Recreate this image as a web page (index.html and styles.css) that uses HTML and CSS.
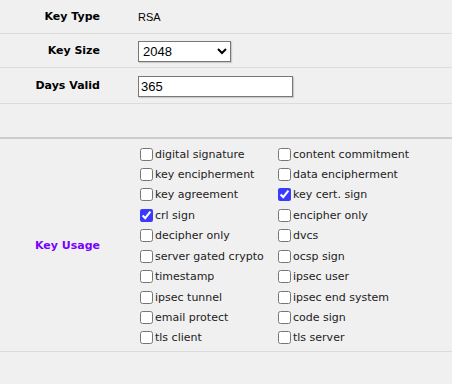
FILE: index.html
```html
<!DOCTYPE html>
<html lang="en">
<head>
    <meta charset="UTF-8">
    <title>Key settings</title>
    <link rel="stylesheet" href="styles.css">
</head>
<body>
    <div class="form">
        <div class="row row-type">
            <div class="label">Key Type</div>
            <div class="value plain">RSA</div>
        </div>
        <div class="row row-size">
            <div class="label">Key Size</div>
            <div class="value">
                <select class="size">
                    <option>1024</option>
                    <option selected>2048</option>
                    <option>4096</option>
                </select>
            </div>
        </div>
        <div class="row row-days">
            <div class="label">Days Valid</div>
            <div class="value"><input class="days" type="text" value="365"></div>
        </div>
        <div class="row row-empty"></div>
        <div class="row row-usage">
            <div class="label usage-label">Key Usage</div>
            <div class="value usage">
                <label><input type="checkbox">digital signature</label>
                <label><input type="checkbox">content commitment</label>
                <label><input type="checkbox">key encipherment</label>
                <label><input type="checkbox">data encipherment</label>
                <label><input type="checkbox">key agreement</label>
                <label><input type="checkbox" checked>key cert. sign</label>
                <label><input type="checkbox" checked>crl sign</label>
                <label><input type="checkbox">encipher only</label>
                <label><input type="checkbox">decipher only</label>
                <label><input type="checkbox">dvcs</label>
                <label><input type="checkbox">server gated crypto</label>
                <label><input type="checkbox">ocsp sign</label>
                <label><input type="checkbox">timestamp</label>
                <label><input type="checkbox">ipsec user</label>
                <label><input type="checkbox">ipsec tunnel</label>
                <label><input type="checkbox">ipsec end system</label>
                <label><input type="checkbox">email protect</label>
                <label><input type="checkbox">code sign</label>
                <label><input type="checkbox">tls client</label>
                <label><input type="checkbox">tls server</label>
            </div>
        </div>
    </div>
</body>
</html>
```

FILE: styles.css
```css
body {
    margin: 0;
    background: #f0f0f0;
    font-family: "DejaVu Sans", Verdana, sans-serif;
    font-size: 11px;
    color: #222;
}
.row {
    display: grid;
    grid-template-columns: 100px 1fr;
    column-gap: 38px;
    align-items: center;
    border-bottom: 1px solid #dcdcdc;
}
.row-type {
    height: 33px;
}
.row-size {
    height: 33px;
}
.row-days {
    height: 35px;
}
.row-empty {
    height: 33px;
    border-bottom: 2px solid #cdcdcd;
}
.row-usage {
    height: 212px;
}
.label {
    font-weight: bold;
    text-align: right;
    color: #000;
}
.usage-label {
    color: #7a00ff;
}
.plain {
    font-family: "Liberation Sans", Arial, sans-serif;
    font-size: 11px;
    color: #000;
}
.size {
    width: 93px;
    height: 21px;
    font-family: "Liberation Sans", Arial, sans-serif;
    font-size: 13px;
    border: 1px solid #777;
    background: #fff;
    box-shadow: 1px 1px 1px rgba(0, 0, 0, 0.15);
    display: block;
    margin-top: 1px;
}
.days {
    width: 155px;
    height: 21px;
    box-sizing: border-box;
    font-family: "Liberation Sans", Arial, sans-serif;
    font-size: 13px;
    border: 1px solid #777;
    box-shadow: 1px 1px 1px rgba(0, 0, 0, 0.15);
    padding: 1px 2px;
    display: block;
    margin-top: 1px;
}
.usage {
    display: grid;
    grid-template-columns: 138px 1fr;
    grid-auto-rows: 20.45px;
    padding-top: 2px;
}
.usage label {
    display: flex;
    align-items: center;
}
.usage input {
    width: 13px;
    height: 13px;
    margin: 0 2px 0 2px;
    accent-color: #3a3aff;
}
```
